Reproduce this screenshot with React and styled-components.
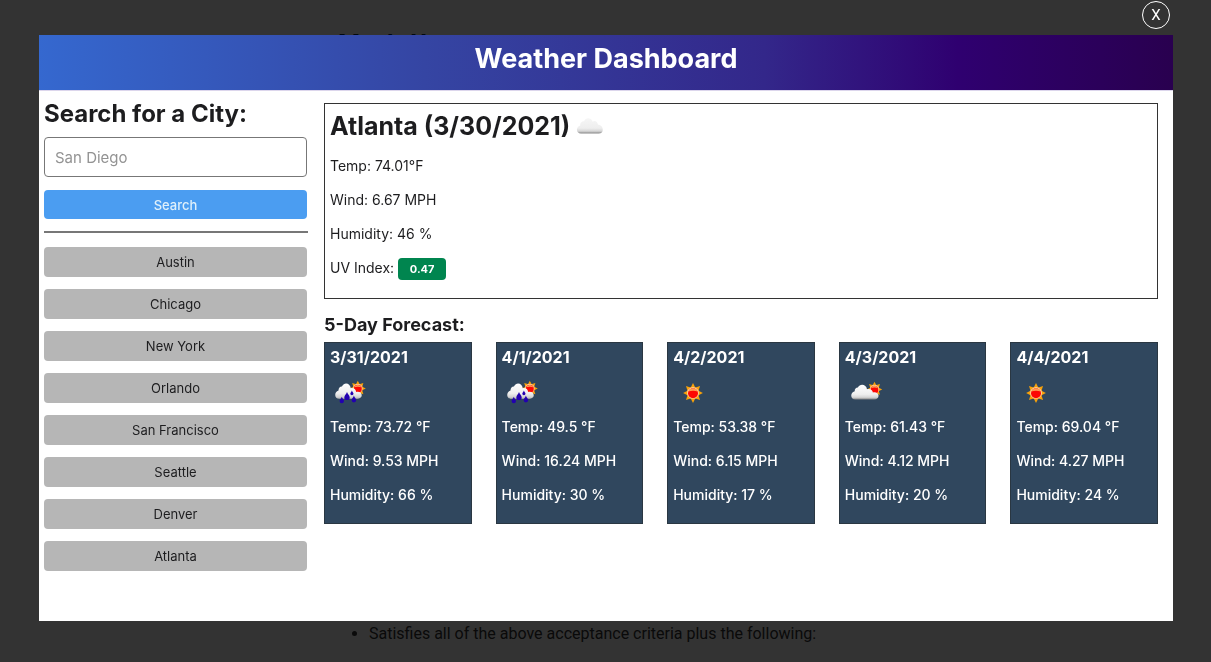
import React from "react";
import styled, { createGlobalStyle } from "styled-components";

const GlobalStyle = createGlobalStyle`
  * { box-sizing: border-box; }
  body {
    margin: 0;
    overflow: hidden;
    background: #fff;
    color: #1d1d1f;
    font-family: Inter, "Liberation Sans", sans-serif;
  }
`;

const Page = styled.div`
  height: 100vh;
  overflow: hidden;
  font-family: Roboto, "Liberation Sans", sans-serif;
`;

const Article = styled.article`
  max-width: 535px;
  margin: 0 auto;
  padding-top: 29px;
`;

const ArticleHeading = styled.h2`
  margin: 0;
  color: #0a2a4a;
  font-size: 25px;
  line-height: 32px;
`;

const Thumbnail = styled.div`
  height: 561px;
`;

const Criteria = styled.ul`
  margin: 0;
  padding: 0 0 0 31px;
  color: #333;
  font-size: 16px;
  line-height: 24px;
`;

const Divider = styled.hr`
  margin: 27px 0 0;
  border: 0;
  height: 1px;
  background: #ffc8dc;
`;

const Backdrop = styled.div`
  position: fixed;
  inset: 0;
  display: flex;
  flex-direction: column;
  padding: 1px 38px 41px 39px;
  background: rgba(0, 0, 0, 0.8);
`;

const CloseButton = styled.button`
  align-self: flex-end;
  width: 28px;
  height: 28px;
  margin: 0 3px 6px;
  padding: 0;
  border: 1px solid #fff;
  border-radius: 50%;
  background: none;
  color: #fff;
  font: 15px/26px Roboto, "Liberation Sans", sans-serif;
`;

const Dialog = styled.section`
  flex: 1;
  background: #fff;
`;

const Header = styled.header`
  padding: 4px 0 11px;
  border-bottom: 1px solid #dcd6ec;
  background: linear-gradient(to right, #3568cf 0%, #3545a3 34%, #33278a 64%, #2f0070 81%, #29004f 100%);
  background-clip: padding-box;
  color: #fff;
  text-align: center;
`;

const Title = styled.h1`
  margin: 0;
  font-size: 27px;
  font-weight: 700;
  line-height: 40px;
`;

const Body = styled.div`
  display: grid;
  grid-template-columns: 264px 1fr;
  gap: 16px;
  padding: 7px 15px 0 5px;
`;

const Sidebar = styled.aside`
  padding-right: 1px;
`;

const SearchLabel = styled.label`
  display: block;
  font-size: 24px;
  font-weight: 700;
  line-height: 32px;
`;

const SearchForm = styled.form`
  display: flex;
  flex-direction: column;
  gap: 13px;
`;

const CityInput = styled.input`
  display: block;
  width: 100%;
  height: 40px;
  margin-top: 7px;
  padding: 0 10px;
  border: 1px solid #777;
  border-radius: 4px;
  background: #fff;
  font: 15px/24px Inter, "Liberation Sans", sans-serif;

  &::placeholder {
    color: #939393;
    opacity: 1;
  }
`;

const Button = styled.button`
  display: block;
  width: 100%;
  height: ${(p) => (p.$primary ? 29 : 30)}px;
  padding: 0;
  border: 0;
  border-radius: 4px;
  background: ${(p) => (p.$primary ? "#4b9df1" : "#b6b6b6")};
  color: ${(p) => (p.$primary ? "#dff0fb" : "#1d1d1f")};
  font: ${(p) => (p.$primary ? 500 : 400)} 13px/20px Inter, "Liberation Sans", sans-serif;
`;

const Rule = styled.hr`
  height: 2px;
  margin: 12px -1px 14px 0;
  border: 0;
  background: #777;
`;

const CityList = styled.div`
  display: flex;
  flex-direction: column;
  gap: 12px;
`;

const Main = styled.main`
  padding-top: 5px;
`;

const Current = styled.section`
  padding: 6px 5px 4px;
  border: 1px solid #333;
`;

const CityTitle = styled.h2`
  display: flex;
  align-items: center;
  gap: 6px;
  margin: 0;
  font-size: 25px;
  font-weight: 700;
  line-height: 32px;
`;

const Reading = styled.p`
  margin: 0 0 14px;
  font-size: 14px;
  font-weight: ${(p) => (p.$strong ? 500 : 400)};
  line-height: 20px;
`;

const Readings = styled.div`
  padding-top: 14px;
`;

const UvBadge = styled.span`
  display: inline-block;
  width: 48px;
  border-radius: 4px;
  background: #00854f;
  color: #fff;
  font-size: 11px;
  font-weight: 700;
  line-height: 22px;
  text-align: center;
`;

const ForecastTitle = styled.h3`
  margin: 13px 0 5px;
  font-size: 18px;
  font-weight: 700;
  line-height: 25px;
`;

const Forecast = styled.div`
  display: grid;
  grid-template-columns: repeat(5, 1fr);
  gap: 24px;
`;

const DayCard = styled.article`
  padding: 3px 5px 4px;
  border: 1px solid #2a3742;
  background: #30475e;
  color: #fff;
`;

const DayTitle = styled.h4`
  margin: 0;
  font-size: 16px;
  font-weight: 700;
  line-height: 22px;
`;

const DayIcon = styled.div`
  display: flex;
  align-items: center;
  height: 49px;
  padding-left: 4px;
`;

function Sun({ x, y, scale = 1 }) {
  const rays = Array.from({ length: 8 }, (_, i) => i * 45);
  return (
    <g transform={`translate(${x} ${y}) scale(${scale})`}>
      {rays.map((a) => (
        <path key={a} d="M-2.5-5 0-9.9 2.5-5Z" fill="#f9a208" transform={`rotate(${a})`} />
      ))}
      <circle r="6.2" fill="#f2a030" />
      <circle r="5.8" fill="#ffdcae" />
      <circle r="5" cy="0.3" fill="#fd0803" />
      <path d="M-4.6-1.6A5 5 0 0 1 4.6-1.6Q0-3 -4.6-1.6Z" fill="#ff9c4e" />
    </g>
  );
}

function WeatherIcon({ kind }) {
  const id = React.useId();
  const fill = `url(#${id})`;
  if (kind === "sun") {
    return (
      <svg width="34" height="26" viewBox="0 0 34 26" role="img" aria-label="Clear">
        <Sun x={16} y={13} />
      </svg>
    );
  }
  const gradient = (
    <defs>
      <linearGradient id={id} x1="0" y1="0" x2="0" y2="1">
        <stop offset="0" stopColor={kind === "cloud" ? "#f6f6f6" : "#ffffff"} />
        <stop offset="0.65" stopColor="#eeeeee" />
        <stop offset="0.85" stopColor="#d6d6d6" />
        <stop offset="1" stopColor={kind === "rain" ? "#b4b4b8" : "#858585"} />
      </linearGradient>
    </defs>
  );
  if (kind === "cloud") {
    return (
      <svg width="28" height="20" viewBox="0 0 28 20" role="img" aria-label="Cloudy">
        {gradient}
        <path
          fill={fill}
          d="M5 17.5C-.2 17.5-.4 10.9 4.2 9.5 3.8 6.2 6.6 4.9 8.1 5.3 9.2 1.1 15.4 1 16.6 5.7 18.9 4.2 21.6 5.5 22 8.8 27.6 8.8 28.9 17.5 22.6 17.5Z"
        />
      </svg>
    );
  }
  if (kind === "partly") {
    return (
      <svg width="34" height="26" viewBox="0 0 34 26" role="img" aria-label="Partly cloudy">
        {gradient}
        <Sun x={25.5} y={9.4} scale={0.78} />
        <path
          fill={fill}
          d="M6.5 19.5C1.1 19.5.9 12.4 5.7 11.2 5.5 8.2 7.6 7.2 8.9 7.4 11.1 3.2 17.4 4.3 18 9.3 20.7 8.2 23.5 9.7 23.9 12.4 31.2 11.2 31.2 19.5 25.3 19.5Z"
        />
      </svg>
    );
  }
  return (
    <svg width="34" height="26" viewBox="0 0 34 26" role="img" aria-label="Rain">
      {gradient}
      <Sun x={23.8} y={8.6} scale={0.8} />
      <path
        fill={fill}
        d="M5.4 18.8C.1 18.8-.1 12 4.5 10.6 4.4 7.4 6.4 6.2 7.9 6.4 10.3 1.6 16.1 3 16.8 8.2 19.7 7.6 21.9 9.4 22.1 12 29.1 10.8 29.5 18.6 23.9 18.8Z"
      />
      <g fill="#2200b0">
        <path d="M13 11.9C13.6 14.4 15.7 15.2 15.7 17.4A2.7 2.7 0 0 1 10.3 17.4C10.3 15.2 12.4 14.4 13 11.9Z" />
        <path d="M7.8 16.8C8.3 18.9 10 19.4 10 21.1A2.2 2.2 0 0 1 5.6 21.1C5.6 19.4 7.3 18.9 7.8 16.8Z" />
        <path d="M19.9 15.5C20.4 17.7 22.2 18.3 22.2 20.1A2.3 2.3 0 0 1 17.6 20.1C17.6 18.3 19.4 17.7 19.9 15.5Z" />
        <path d="M17.9 10.4C18.3 12 19.5 12.4 19.5 13.6A1.6 1.6 0 0 1 16.3 13.6C16.3 12.4 17.5 12 17.9 10.4Z" />
      </g>
    </svg>
  );
}

const cities = ["Austin", "Chicago", "New York", "Orlando", "San Francisco", "Seattle", "Denver", "Atlanta"];

const days = [
  { date: "3/31/2021", icon: "rain", temp: "73.72", wind: "9.53", humidity: 66 },
  { date: "4/1/2021", icon: "rain", temp: "49.5", wind: "16.24", humidity: 30 },
  { date: "4/2/2021", icon: "sun", temp: "53.38", wind: "6.15", humidity: 17 },
  { date: "4/3/2021", icon: "partly", temp: "61.43", wind: "4.12", humidity: 20 },
  { date: "4/4/2021", icon: "sun", temp: "69.04", wind: "4.27", humidity: 24 },
];

export default function App() {
  return (
    <>
      <GlobalStyle />
      <Page>
        <Article>
          <ArticleHeading>Mock-Up</ArticleHeading>
          <Thumbnail />
          <Criteria>
            <li>Satisfies all of the above acceptance criteria plus the following:</li>
          </Criteria>
        </Article>
        <Divider />
      </Page>
      <Backdrop>
        <CloseButton type="button" aria-label="Close">X</CloseButton>
        <Dialog role="dialog" aria-label="Weather Dashboard">
          <Header>
            <Title>Weather Dashboard</Title>
          </Header>
          <Body>
            <Sidebar>
              <SearchForm onSubmit={(e) => e.preventDefault()}>
                <div>
                  <SearchLabel htmlFor="city">Search for a City:</SearchLabel>
                  <CityInput id="city" type="text" placeholder="San Diego" />
                </div>
                <Button type="submit" $primary>Search</Button>
              </SearchForm>
              <Rule />
              <CityList>
                {cities.map((c) => (
                  <Button type="button" key={c}>{c}</Button>
                ))}
              </CityList>
            </Sidebar>
            <Main>
              <Current>
                <CityTitle>
                  Atlanta (3/30/2021) <WeatherIcon kind="cloud" />
                </CityTitle>
                <Readings>
                  <Reading>Temp: 74.01°F</Reading>
                  <Reading>Wind: 6.67 MPH</Reading>
                  <Reading>Humidity: 46 %</Reading>
                  <Reading>UV Index: <UvBadge>0.47</UvBadge></Reading>
                </Readings>
              </Current>
              <ForecastTitle>5-Day Forecast:</ForecastTitle>
              <Forecast>
                {days.map((d) => (
                  <DayCard key={d.date}>
                    <DayTitle>{d.date}</DayTitle>
                    <DayIcon><WeatherIcon kind={d.icon} /></DayIcon>
                    <Reading $strong>Temp: {d.temp} °F</Reading>
                    <Reading $strong>Wind: {d.wind} MPH</Reading>
                    <Reading $strong>Humidity: {d.humidity} %</Reading>
                  </DayCard>
                ))}
              </Forecast>
            </Main>
          </Body>
        </Dialog>
      </Backdrop>
    </>
  );
}
